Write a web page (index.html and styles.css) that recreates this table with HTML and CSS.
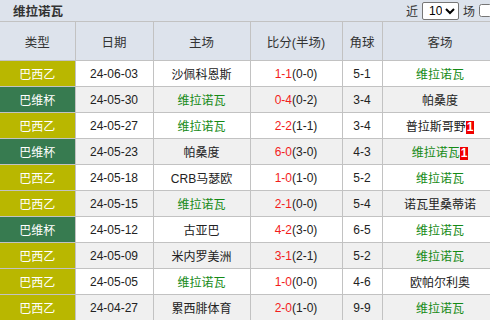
FILE: index.html
```html
<!DOCTYPE html>
<html>
<head>
<meta charset="utf-8">
<link rel="stylesheet" href="styles.css">
</head>
<body>
<div class="panel">
  <div class="titlebar">
    <span class="title">维拉诺瓦</span>
    <div class="filter">
      <span>近</span>
      <select class="sel"><option>10</option></select>
      <span>场</span>
      <input type="checkbox" class="chk">
    </div>
  </div>
  <table class="tbl">
    <colgroup>
      <col class="c1"><col class="c2"><col class="c3"><col class="c4"><col class="c5"><col class="c6">
    </colgroup>
    <thead>
      <tr><th>类型</th><th>日期</th><th>主场</th><th>比分(半场)</th><th>角球</th><th>客场</th></tr>
    </thead>
    <tbody>
      <tr><td class="lg yl">巴西乙</td><td>24-06-03</td><td>沙佩科恩斯</td><td><span class="r">1-1</span>(0-0)</td><td>5-1</td><td class="g">维拉诺瓦</td></tr>
      <tr class="alt"><td class="lg gr">巴维杯</td><td>24-05-30</td><td class="g">维拉诺瓦</td><td><span class="r">0-4</span>(0-2)</td><td>3-4</td><td>帕桑度</td></tr>
      <tr><td class="lg yl">巴西乙</td><td>24-05-27</td><td class="g">维拉诺瓦</td><td><span class="r">2-2</span>(1-1)</td><td>3-4</td><td>普拉斯哥野<span class="badge">1</span></td></tr>
      <tr class="alt"><td class="lg gr">巴维杯</td><td>24-05-23</td><td>帕桑度</td><td><span class="r">6-0</span>(3-0)</td><td>4-3</td><td class="g">维拉诺瓦<span class="badge">1</span></td></tr>
      <tr><td class="lg yl">巴西乙</td><td>24-05-18</td><td>CRB马瑟欧</td><td><span class="r">1-0</span>(1-0)</td><td>5-2</td><td class="g">维拉诺瓦</td></tr>
      <tr class="alt"><td class="lg yl">巴西乙</td><td>24-05-15</td><td class="g">维拉诺瓦</td><td><span class="r">2-1</span>(0-0)</td><td>5-4</td><td>诺瓦里桑蒂诺</td></tr>
      <tr><td class="lg gr">巴维杯</td><td>24-05-12</td><td>古亚巴</td><td><span class="r">4-2</span>(3-0)</td><td>6-5</td><td class="g">维拉诺瓦</td></tr>
      <tr class="alt"><td class="lg yl">巴西乙</td><td>24-05-09</td><td>米内罗美洲</td><td><span class="r">3-1</span>(2-1)</td><td>5-2</td><td class="g">维拉诺瓦</td></tr>
      <tr><td class="lg yl">巴西乙</td><td>24-05-05</td><td class="g">维拉诺瓦</td><td><span class="r">1-0</span>(0-0)</td><td>4-6</td><td>欧帕尔利奥</td></tr>
      <tr class="alt"><td class="lg yl">巴西乙</td><td>24-04-27</td><td>累西腓体育</td><td><span class="r">2-0</span>(1-0)</td><td>9-9</td><td class="g">维拉诺瓦</td></tr>
    </tbody>
  </table>
</div>
</body>
</html>
```
FILE: styles.css
```css
html, body {
  margin: 0;
  padding: 0;
  overflow: hidden;
  background: #fff;
}
body {
  font-family: "Liberation Sans", "Noto Sans CJK SC", sans-serif;
  font-size: 12px;
  color: #333;
}
.panel {
  width: 498px;
}
.titlebar {
  height: 21px;
  background: #dde3ec;
  display: flex;
  align-items: center;
  justify-content: space-between;
  box-sizing: border-box;
}
.title {
  font-weight: bold;
  font-size: 12.5px;
  padding-left: 13px;
  color: #333;
}
.filter {
  display: flex;
  align-items: center;
  gap: 4px;
  padding-right: 6px;
  font-size: 12px;
  color: #333;
}
.sel {
  width: 37px;
  height: 18px;
  font-size: 12px;
  font-family: "Liberation Sans", sans-serif;
  padding: 0 0 0 2px;
  margin: 0;
  border: 1px solid #767676;
  border-radius: 2px;
  background: #fff;
  color: #000;
}
.chk {
  width: 13px;
  height: 13px;
  margin: 0;
}
.tbl {
  border-collapse: collapse;
  table-layout: fixed;
  width: 498px;
}
.c1 { width: 75px; }
.c2 { width: 78px; }
.c3 { width: 97px; }
.c4 { width: 92px; }
.c5 { width: 40px; }
.c6 { width: 116px; }
.tbl th, .tbl td {
  border: 1px solid #c2c2c2;
  text-align: center;
  padding: 0;
  white-space: nowrap;
  overflow: hidden;
}
.tbl th:first-child, .tbl td:first-child {
  border-left: none;
}
.tbl th {
  height: 38px;
  background: #dde3ec;
  font-weight: normal;
  font-size: 12.5px;
  color: #333;
}
.tbl td {
  height: 25px;
  background: #fff;
  color: #222;
}
.tbl tr.alt td {
  background: #f0f0f0;
}
.tbl td.lg {
  color: #fff;
}
.tbl td.yl, .tbl tr.alt td.yl {
  background: #b9b700;
}
.tbl td.gr, .tbl tr.alt td.gr {
  background: #377b50;
}
.tbl td.g {
  color: #158a15;
}
.r {
  color: #f31c1c;
}
.badge {
  display: inline-block;
  background: #f00000;
  color: #fff;
  font-weight: bold;
  font-size: 12px;
  line-height: 13px;
  padding: 0 1px;
  vertical-align: 0;
}
```
